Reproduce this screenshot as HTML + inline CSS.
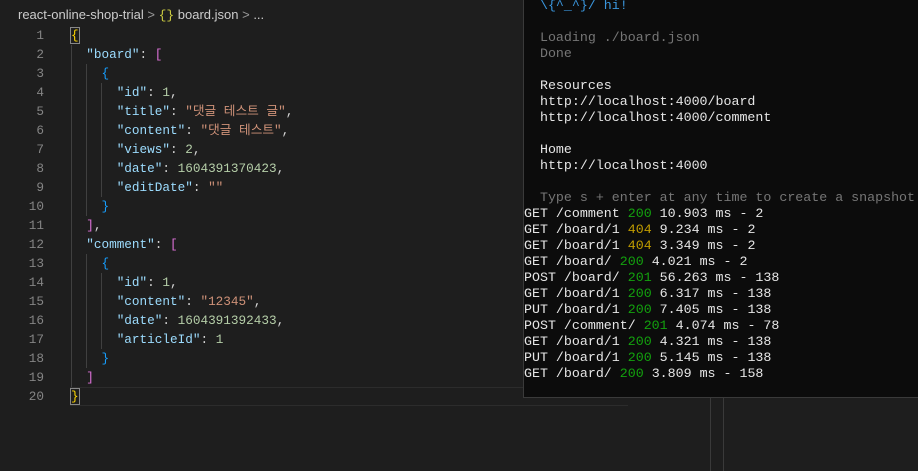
<!DOCTYPE html>
<html><head><meta charset="utf-8"><style>
html,body{margin:0;padding:0;width:918px;height:471px;overflow:hidden;background:#1e1e1e;position:relative}
.ed{position:absolute;font-family:"Liberation Mono","Noto Sans CJK KR",monospace;font-size:12.7px;white-space:pre}
.ln{position:absolute;left:0;width:44px;text-align:right;color:#858585}
.code{position:absolute;left:71px;color:#d4d4d4}
.k{color:#9cdcfe}.s{color:#ce9178}.n{color:#b5cea8}.y{color:#ffd700}.p{color:#da70d6}.b{color:#179fff}
.term{position:absolute;left:523px;top:-1px;width:394px;height:398px;background:#0c0c0c;border:1px solid #3a3a3a;border-top:none;overflow:hidden;font-family:"Liberation Mono",monospace;font-size:13.3px;line-height:16px;white-space:pre;color:#e6e6e6}
.g{color:#13a10e}.o{color:#c19c00}
</style></head><body>
<div style="position:absolute;left:18px;top:7px;font-family:'Liberation Sans',sans-serif;font-size:13px;color:#cccccc">react-online-shop-trial <span style="color:#999">&gt;</span> <span style="color:#cbcb41;font-family:'Liberation Mono',monospace">{}</span> board.json <span style="color:#999">&gt;</span> ...</div>
<div style="position:absolute;left:70px;top:387px;width:558px;height:17px;border-top:1px solid #2c2c2c;border-bottom:1px solid #2c2c2c"></div>
<div style="position:absolute;left:710px;top:398px;width:1px;height:73px;background:#3a3a3a"></div>
<div style="position:absolute;left:723px;top:398px;width:1px;height:73px;background:#3a3a3a"></div>
<div style="position:absolute;left:71px;top:45px;width:1px;height:342px;background:#404040"></div>
<div style="position:absolute;left:86px;top:64px;width:1px;height:152px;background:#404040"></div>
<div style="position:absolute;left:86px;top:254px;width:1px;height:114px;background:#404040"></div>
<div style="position:absolute;left:101px;top:83px;width:1px;height:114px;background:#404040"></div>
<div style="position:absolute;left:101px;top:273px;width:1px;height:76px;background:#404040"></div>
<div class="ed" style="top:26px;left:0;width:600px;line-height:19px"><div class="ln">1
2
3
4
5
6
7
8
9
10
11
12
13
14
15
16
17
18
19
20</div><div class="code"><span class="y" style="outline:1px solid #888">{</span>
  <span class="k">"board"</span>: <span class="p">[</span>
    <span class="b">{</span>
      <span class="k">"id"</span>: <span class="n">1</span>,
      <span class="k">"title"</span>: <span class="s">"댓글 테스트 글"</span>,
      <span class="k">"content"</span>: <span class="s">"댓글 테스트"</span>,
      <span class="k">"views"</span>: <span class="n">2</span>,
      <span class="k">"date"</span>: <span class="n">1604391370423</span>,
      <span class="k">"editDate"</span>: <span class="s">""</span>
    <span class="b">}</span>
  <span class="p">]</span>,
  <span class="k">"comment"</span>: <span class="p">[</span>
    <span class="b">{</span>
      <span class="k">"id"</span>: <span class="n">1</span>,
      <span class="k">"content"</span>: <span class="s">"12345"</span>,
      <span class="k">"date"</span>: <span class="n">1604391392433</span>,
      <span class="k">"articleId"</span>: <span class="n">1</span>
    <span class="b">}</span>
  <span class="p">]</span>
<span class="y" style="outline:1px solid #888">}</span></div></div>
<div class="term"><div style="position:absolute;left:0;top:-1px">  <span style="color:#3a96dd">\{^_^}/ hi!</span>

  <span style="color:#767676">Loading ./board.json</span>
  <span style="color:#767676">Done</span>

  Resources
  http://localhost:4000/board
  http://localhost:4000/comment

  Home
  http://localhost:4000

  <span style="color:#767676">Type s + enter at any time to create a snapshot of the database</span>
GET /comment <span class="g">200</span> 10.903 ms - 2
GET /board/1 <span class="o">404</span> 9.234 ms - 2
GET /board/1 <span class="o">404</span> 3.349 ms - 2
GET /board/ <span class="g">200</span> 4.021 ms - 2
POST /board/ <span class="g">201</span> 56.263 ms - 138
GET /board/1 <span class="g">200</span> 6.317 ms - 138
PUT /board/1 <span class="g">200</span> 7.405 ms - 138
POST /comment/ <span class="g">201</span> 4.074 ms - 78
GET /board/1 <span class="g">200</span> 4.321 ms - 138
PUT /board/1 <span class="g">200</span> 5.145 ms - 138
GET /board/ <span class="g">200</span> 3.809 ms - 158</div></div>
</body></html>
